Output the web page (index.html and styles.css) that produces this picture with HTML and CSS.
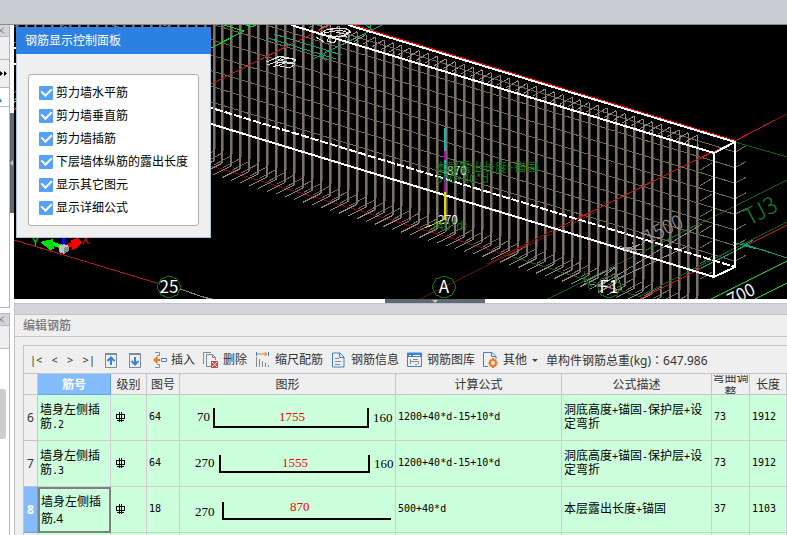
FILE: index.html
```html
<!DOCTYPE html>
<html lang="zh-CN">
<head>
<meta charset="utf-8">
<title>编辑钢筋</title>
<link rel="stylesheet" href="styles.css">
</head>
<body>
<header class="topbar"></header>
<div class="workspace">
  <aside class="sidebar">
    <section class="dock dock-upper">
      <div class="dock-head"><button class="close" aria-label="关闭"><svg width="5" height="7" viewBox="0 0 5 7"><path d="M-2 0.5L4 6.5M4 0.5L-2 6.5"/></svg></button></div>
      <div class="dock-row"></div>
      <div class="dock-row tall"><svg width="8" height="7" viewBox="0 0 8 7"><path d="M0 1v5l3-2.500zM4 1v5l3-2.500z"/></svg></div>
      <div class="dock-row light"><svg width="2" height="6" viewBox="0 0 2 6"><path class="blue" d="M0 1L2 5H0z"/></svg></div>
    </section>
    <section class="dock dock-lower">
      <div class="dock-head"><button class="close" aria-label="关闭"><svg width="5" height="7" viewBox="0 0 5 7"><path d="M-2 0.5L4 6.5M4 0.5L-2 6.5"/></svg></button></div>
      <div class="dock-row"></div>
      <div class="thumb"></div>
    </section>
  </aside>
  <div class="gutter"><button class="grip" aria-label="收起"><svg width="4" height="6" viewBox="0 0 4 6"><path d="M3 0v6L0 3z"/></svg></button></div>
  <main class="main">
    <section class="view">
      <svg class="scene" viewBox="14 25 773 274" preserveAspectRatio="xMinYMin slice">
        <g>
          <path class="dred" d="M14 107L211 166L507 255"/>
          <path class="drk" d="M420 299L500 259L600 210"/>
          <path class="dgreen" d="M735 142L787 157M507 255L644 298M548 299L787 180"/>
        </g>
        <g id="bars"></g>
        <g class="lines">
          <path class="red" d="M211 84L330 25"/>
          <path class="green" d="M211 48L244 31L224 25M246 25L251 27L256 25"/>
          <path class="red" d="M550 232L735 141L775 120"/>
          <path class="dred" d="M775 120L787 114M487 264L550 232"/>
          <path class="dgreen" d="M640 296L787 222"/>
          <path class="red" d="M640 299L787 225"/>
          <path class="green" d="M711 299L787 261M755 299L787 283"/>
          <path class="teal" d="M274 34L342 55M268 38L336 59M313 59L382 25M319 53L326 61M326 51L322 59M366 25L375 32M371 25L370 32M701 268L747 245M733 242L756 249M737 250L753 240M747 245L787 258M742 243L752 248"/>
          <path class="gray" d="M584 282L615 267M598 287L702 224M584 283L621 290M615 267L622 290M615 280L690 245M616 267L604 276"/>
          <path class="dgreen" d="M584 271L590 291M582 276L593 288"/>
        </g>
        <g class="wall">
          <path class="redtop" d="M352 25L735 141"/>
          <path d="M348 25L735 142V267L714 277V153L291 25M714 153L735 142M14 64L714 277"/>
          <path class="dash" d="M14 48L735 267"/>
        </g>
        <g class="marks">
          <path class="cyan" d="M445 128V182"/>
          <path class="magenta" d="M445 151V160M445 176V192"/>
          <path class="yellow" d="M445 192V220"/>
          <path class="yellow thin" d="M445 219L425 228"/>
          <path class="redaxis" d="M14 240L160 284"/>
          <path class="gray" d="M180 289L209 299M200 296L212 299"/>
        </g>
        <g class="gizmo">
          <path class="gz-g" d="M63 247L50 243"/><path class="gz-gf" d="M40 242L53 239L54 249L50 250z"/>
          <path class="gz-r" d="M65 247L78 242"/><path class="gz-rf" d="M71 240L77 238L82 242L77 248L72 250z"/>
          <path class="gz-b" d="M64 238V248"/><path class="gz-c" d="M59 246L64 244L69 246V251L64 254L59 252z"/>
          <path class="gz-t" d="M64 248V254L69 251V246z"/>
        </g>
        <text class="axis-y" x="32" y="246">Y</text><text class="axis-x" x="82" y="244">X</text>
        <g class="balloons">
          <path d="M169 276L177 279L181 287L177 295L169 298L161 295L157 287L161 279zM444 276L452 279L456 287L452 295L444 298L436 295L432 287L436 279zM609 276L617 279L621 286L617 295L609 298L601 295L597 286L601 279z"/>
          <text x="169" y="293">25</text><text x="444" y="293">A</text><text x="609" y="293">F1</text>
        </g>
        <g class="notes">
          <text class="n-white" x="447" y="175">870</text>
          <text class="n-white" x="438" y="224">270</text>
          <text class="n-green" x="435" y="172">本层露出长度+锚固</text>
          <text class="n-green" x="436" y="183">500+40*d</text>
          <text class="n-green" x="433" y="230">(40*d)</text>
          <text class="n-white big" x="731" y="306" transform="rotate(-26 731 306)">700</text>
          <text class="n-tag" x="749" y="226" transform="rotate(-28 749 226)">TJ3</text>
          <text class="n-dim" x="648" y="244" transform="rotate(-26 648 244)">1500</text>
        </g>
        <g class="flat">
          <path d="M266 62l16-6M267 65l20-7M273 67l12-4M275 58l4-2 15 3M279 62l16 2-5 4-15-3zM283 57l13 3-4 3-14-3zM318 35l8-5 14-2M316 37l8 5M324 33l16-3 9 3-10 4-14-2zM330 29l15-1 6 4-9 5M327 41l7 2 3-4-8-2zM334 36l13 1M336 32l12 3"/>
          <path class="dim" d="M619 246l16 6M628 252l12-8M623 247l20 3M632 242l5 11M641 245l5-6M624 250l14-5M641 233l19 6"/>
        </g>
      </svg>
      <form class="dialog">
        <h2>钢筋显示控制面板</h2>
        <div class="dialog-body">
          <div class="options">
            <label><input type="checkbox" checked>剪力墙水平筋</label>
            <label><input type="checkbox" checked>剪力墙垂直筋</label>
            <label><input type="checkbox" checked>剪力墙插筋</label>
            <label><input type="checkbox" checked>下层墙体纵筋的露出长度</label>
            <label><input type="checkbox" checked>显示其它图元</label>
            <label><input type="checkbox" checked>显示详细公式</label>
          </div>
        </div>
      </form>
    </section>
    <div class="splitter"><button class="grip-h" aria-label="收起"><svg width="6" height="3" viewBox="0 0 6 3"><path d="M0 0h6L3 3z"/></svg></button></div>
    <section class="editor">
      <div class="editor-strip"></div>
      <h1>编辑钢筋</h1>
      <div class="editor-box">
        <div class="toolbar">
          <div class="nav"><button>|&lt;</button><button>&lt;</button><button>&gt;</button><button>&gt;|</button></div>
          <button class="sq" aria-label="上移"><svg width="12" height="15" viewBox="0 0 12 15"><path class="k" d="M0 .5h12M0 1.500h12M.5 0v14.500h11V0"/><path class="b2" d="M6 12V5M2.500 8L6 4.500 9.500 8"/></svg></button>
          <button class="sq" aria-label="下移"><svg width="12" height="15" viewBox="0 0 12 15"><path class="k" d="M0 .5h12M0 1.500h12M.5 0v14.500h11V0"/><path class="b2" d="M6 4V11M2.500 8L6 11.500 9.500 8"/></svg></button>
          <button class="tool"><svg width="14" height="16" viewBox="0 0 14 16"><path class="k" d="M2 .5h4.500V4M2 15.500h4.500V12M4 3.500h3M4 12.500h3"/><path class="o" d="M7 8H1.500M4.500 5L1.500 8l3 3"/><path class="b" d="M8.500 6.500h5v3h-5z"/></svg>插入</button>
          <button class="tool"><svg width="16" height="16" viewBox="0 0 16 16"><path class="k" d="M.5 12V.5H8M8 14.500H3.500v-12h6l3 3V8M9.500 2.500v3h3"/><path class="rf" d="M8 9h7v7H8z"/><path class="w" d="M9 10l5 5M14 10l-5 5"/></svg>删除</button>
          <button class="tool"><svg width="16" height="16" viewBox="-1 0 16 16"><path class="b" d="M.5 0v4M12.500 0v4"/><path class="o1" d="M1 2h10M8.500 0l2.500 2-2.500 2"/><path class="k" d="M.5 5v10M3.500 7v8M6.500 9v6M9.500 11v4M12.500 13v2"/></svg>缩尺配筋</button>
          <button class="tool"><svg width="16" height="16" viewBox="0 0 16 16"><path class="b" d="M1.500 1H9l4 4v10H1.500zM8.500 1v4.500H13"/><path class="k" d="M4 6.500h4M4 9.500h6M4 12.500h5"/></svg>钢筋信息</button>
          <button class="tool"><svg width="16" height="16" viewBox="0 0 16 16"><path class="b" d="M.5 1v13.500h14V1z"/><path class="bf" d="M0 1h15v4H0z"/><path class="w" d="M2 3.500h2M6 3.500h7"/><path class="k" d="M3.500 7v5M3.500 9.500h8V12M6 7.500h5"/><path class="o1" d="M8 12.500h2"/></svg>钢筋图库</button>
          <button class="tool"><svg width="16" height="16" viewBox="0 0 16 16"><path class="b" d="M5 14.500H.5V.5H9l4 4V7M8.500.5v4H13"/><circle class="gear" cx="10" cy="11" r="3"/><path class="o" d="M10 6v2M10 14v2M5.500 11h2M12.500 11h2M7 8l1 1M12 13l1 1M13 8l-1 1M8 13l-1 1"/></svg>其他<span class="caret"></span></button>
          <span class="total">单构件钢筋总重(kg)<span class="colon" lang="zh-TW">：</span>647.986</span>
        </div>
        <table class="grid">
          <colgroup><col class="c0"><col class="c1"><col class="c2"><col class="c3"><col><col class="c5"><col class="c6"><col class="c7"><col class="c8"></colgroup>
          <thead><tr><th></th><th class="on">筋号</th><th>级别</th><th>图号</th><th>图形</th><th>计算公式</th><th>公式描述</th><th><div class="clip">弯曲调整</div></th><th>长度</th></tr></thead>
          <tbody>
            <tr><th>6</th><td>墙身左侧插筋<span class="m">.2</span></td><td><svg class="grade" width="9" height="10" viewBox="0 0 9 10"><path d="M0 2.500h9M0 6.500h9M1 8.500h7M.5 2v5M8.500 2v5M3.500 0v10M5.500 0v10"/></svg></td><td class="num">64</td>
              <td class="shape"><svg viewBox="180 395 215 45"><path d="M214 408V427H368V408"/><text x="197" y="421">70</text><text class="r" x="279" y="421">1755</text><text x="373" y="422">160</text></svg></td>
              <td class="num">1200+40*d-15+10*d</td><td>洞底高度<span class="m">+</span>锚固<span class="m">-</span>保护层<span class="m">+</span>设定弯折</td><td class="num">73</td><td class="num">1912</td></tr>
            <tr><th>7</th><td>墙身左侧插筋<span class="m">.3</span></td><td><svg class="grade" width="9" height="10" viewBox="0 0 9 10"><path d="M0 2.500h9M0 6.500h9M1 8.500h7M.5 2v5M8.500 2v5M3.500 0v10M5.500 0v10"/></svg></td><td class="num">64</td>
              <td class="shape"><svg viewBox="180 441 215 45"><path d="M220 455V472H369V455"/><text x="195" y="467">270</text><text class="r" x="282" y="467">1555</text><text x="374" y="468">160</text></svg></td>
              <td class="num">1200+40*d-15+10*d</td><td>洞底高度<span class="m">+</span>锚固<span class="m">-</span>保护层<span class="m">+</span>设定弯折</td><td class="num">73</td><td class="num">1912</td></tr>
            <tr><th class="on">8</th><td class="focus">墙身左侧插筋.4</td><td><svg class="grade" width="9" height="10" viewBox="0 0 9 10"><path d="M0 2.500h9M0 6.500h9M1 8.500h7M.5 2v5M8.500 2v5M3.500 0v10M5.500 0v10"/></svg></td><td class="num">18</td>
              <td class="shape"><svg viewBox="180 487 215 45"><path d="M223 502V519H391"/><text x="195" y="516">270</text><text class="r" x="290" y="511">870</text></svg></td>
              <td class="num">500+40*d</td><td>本层露出长度<span class="m">+</span>锚固</td><td class="num">37</td><td class="num">1103</td></tr>
            <tr><th></th><td></td><td></td><td></td><td></td><td></td><td></td><td></td><td></td></tr>
          </tbody>
        </table>
      </div>
    </section>
  </main>
</div>
<script src="scene.js"></script>
</body>
</html>
```
FILE: styles.css
```css
* { box-sizing: border-box; }
body {
  margin: 0; height: 100vh; overflow: hidden; display: flex; flex-direction: column;
  font: 12px/16px "Noto Sans", "Noto Sans CJK SC", sans-serif; color: #333; background: #fff;
}
button { font: inherit; color: inherit; border: 0; padding: 0; background: none; display: flex; align-items: center; white-space: nowrap; }
svg { display: block; flex: none; }
h1, h2 { margin: 0; font-size: 12px; font-weight: 400; }

.topbar { height: 25px; flex: none; background: #cacdd2; border-bottom: 1px solid #868d91; }
.workspace { flex: 1; min-height: 0; display: flex; }

.sidebar { width: 10px; flex: none; display: flex; flex-direction: column; gap: 5px; overflow: hidden; }
.dock { border-right: 1px solid #b5b5b9; background: #fff; }
.dock-upper { height: 283px; border-bottom: 1px solid #b5b5b9; }
.dock-lower { flex: 1; border-top: 1px solid #b5b5b9; }
.dock-head { height: 12px; background: #d3d4da; border-bottom: 1px solid #bbb; display: flex; align-items: center; }
.close svg { fill: none; stroke: #777; }
.dock-row { height: 23px; background: #efefef; border-bottom: 1px solid #b9b9bf; display: flex; align-items: center; }
.dock-row.tall { height: 28px; }
.dock-row.light { height: 19px; background: #fff; align-items: flex-end; padding-bottom: 3px; }
.dock-row .blue { fill: #2688c8; }
.thumb { width: 6px; height: 50px; margin-top: 40px; background: #cdcdcd; border-radius: 0 3px 3px 0; }

.gutter { width: 4px; flex: none; padding-top: 88px; }
.grip { width: 4px; height: 100px; background: #5f6a75; }
.grip svg, .grip-h svg { fill: #c4c8cc; }

.main { flex: 1; min-width: 0; display: flex; flex-direction: column; }
.view { height: 274px; flex: none; position: relative; background: #000; overflow: hidden; }
.scene { width: 100%; height: 100%; fill: none; stroke-width: 1; }
.scene path { shape-rendering: crispEdges; }
.red { stroke: #d01212; } .dred { stroke: #860a0a; } .drk { stroke: #5c1808; }
.green { stroke: #0ce00c; } .dgreen { stroke: #0a640f; } .teal { stroke: #0ca47c; } .gray { stroke: #858585; }
.redaxis { stroke: #b01818; }
.rod { stroke: #7d706b; stroke-width: 2; } .rod-dark { stroke: #47433a; stroke-width: 1; }
.hook { stroke: #96847f; } .hook-dark { stroke: #6e6656; } .mesh { stroke: #6c694d; }
.wall { stroke: #fff; stroke-width: 2; } .wall .redtop { stroke: #f00; } .dash { stroke-dasharray: 8 2; }
.marks .cyan { stroke: #12b4be; stroke-width: 2; } .marks .magenta { stroke: #b400b4; stroke-width: 2; }
.marks .yellow { stroke: #e0d800; stroke-width: 2; } .marks .thin { stroke-width: 1; }
.gz-g { stroke: #0f0; stroke-width: 4; } .gz-gf { fill: #00e010; } .gz-r { stroke: #d00; stroke-width: 4; } .gz-rf { fill: #f00; }
.gz-b { stroke: #00f; stroke-width: 4; } .gz-c { fill: #c0c0c0; } .gz-t { fill: #8c8c8c; }
.axis-y { fill: #0e0; font-size: 12px; } .axis-x { fill: #e01010; font-size: 12px; }
.balloons { stroke: #0a780f; } .balloons text { stroke: none; fill: #fff; font: 17px "Noto Sans CJK SC", sans-serif; text-anchor: middle; }
.notes { font-family: "Noto Sans CJK SC", sans-serif; }
.notes .n-white { fill: #eee; font-size: 12px; } .notes .big { font-size: 17px; }
.notes .n-green { fill: #087c10; font-size: 12px; } .notes .n-tag { fill: #0b8428; font-size: 23px; font-weight: 300; }
.notes .n-dim { fill: #999; font-size: 19px; font-weight: 300; }
.flat { stroke: #e0e0e0; } .flat .dim { stroke: #999; }

.dialog { position: absolute; left: 2px; top: 2px; width: 195px; background: #efefef; border: 1px solid #b4c3dc; border-top: 0; color: #000; }
.dialog h2 { margin: 0 -1px; height: 27px; line-height: 27px; padding-left: 9px; color: #fff; background: #2c80e2; }
.dialog-body { padding: 20px 11px 11px; }
.options { background: #fff; border: 1px solid #b0b0b0; border-radius: 3px; padding: 6px 10px; }
.options label { display: flex; align-items: center; gap: 3px; height: 23px; white-space: nowrap; }
.options input { appearance: none; margin: 0; width: 14px; height: 14px; flex: none; border-radius: 1px; background: #55a0f8; display: grid; place-items: center; }
.options input:checked::after { content: ""; width: 5px; height: 8px; margin-bottom: 3px; border: solid #fff; border-width: 0 2px 2px 0; transform: rotate(45deg); }

.splitter { height: 4px; flex: none; display: flex; justify-content: center; }
.grip-h { width: 100px; height: 4px; margin-left: 69px; background: #5f6a75; justify-content: center; align-items: flex-end; }

.editor { flex: 1; min-height: 0; display: flex; flex-direction: column; background: #efefef; border: solid #bfc2c8; border-width: 1px 0 0 1px; }
.editor-strip { height: 11px; flex: none; background: #d3d5da; border-bottom: 1px solid #c0c3ca; }
.editor h1 { height: 22px; flex: none; line-height: 22px; padding-left: 8px; color: #777; font-weight: 500; border-bottom: 1px solid #c3c5ca; }
.editor-box { flex: 1; min-height: 0; margin: 8px 0 0 8px; border: solid #c3c3c8; border-width: 1px 0 0 1px; overflow: hidden; }
.toolbar { height: 28px; display: flex; align-items: center; gap: 8px; padding: 1px 0 0 6px; border-bottom: 1px solid #c3c3c8; white-space: nowrap; }
.nav { display: flex; justify-content: space-between; width: 65px; margin-right: 2px; }
.nav button { font-size: 11px; }
.sq { margin-right: 4px; }
.tool { gap: 4px; }
.toolbar svg { fill: none; }
.colon { font-family: "Noto Sans CJK TC", sans-serif; }
.k { stroke: #7d8c97; } .b { stroke: #3c82d2; } .b2 { stroke: #3c82d2; stroke-width: 2; } .bf { fill: #3c82d2; }
.o { stroke: #f07820; stroke-width: 2; } .o1 { stroke: #f07820; } .gear { stroke: #f07820; stroke-width: 2; } .w { stroke: #fff; } .rf { fill: #d94545; }
.caret { border: 3px solid transparent; border-top-color: #444; border-bottom: 0; margin-left: 1px; }

.grid { width: 100%; table-layout: fixed; border-collapse: separate; border-spacing: 0; color: #000; }
.c0 { width: 14px; } .c1 { width: 73px; } .c2 { width: 36px; } .c3 { width: 33px; }
.c5 { width: 166px; } .c6 { width: 150px; } .c7 { width: 38px; } .c8 { width: 37px; }
.grid th { padding: 0; font-weight: 400; color: #333; background: #efefef; border: solid #c3c3c8; border-width: 0 1px 1px 0; }
.grid thead th { height: 21px; padding-top: 1px; }
.grid th.on { background: #83bbfb; color: #fff; font-weight: 700; border-color: #62a4ec; }
.clip { height: 19px; line-height: 15px; overflow: hidden; display: flex; align-items: center; }
.grid td { height: 46px; padding: 0 2px 1px; line-height: 14px; background: #ccffdb; border: solid #d3cdd3; border-width: 0 1px 1px 0; overflow: hidden; }
.grid td.num, .m { font-family: "DejaVu Sans Mono", monospace; font-size: 10px; }
.m { line-height: 10px; }
.grid td.focus { border: 2px solid #808080; padding: 0 1px; line-height: 17px; }
.grid td.shape { padding: 0; }
.grade { margin-left: 3px; fill: none; stroke: #000; shape-rendering: crispEdges; }
.shape svg { width: 100%; height: 45px; }
.shape path { fill: none; stroke: #000; stroke-width: 2; }
.shape text { font: 13px "Liberation Serif", serif; fill: #000; }
.shape .r { fill: #f00; }
```
FILE: scene.js
```js
// Draws the reinforcement cage: horizontal mesh lines, vertical rods and their hooks.
const frontTop = x => 153 - (714 - x) * 0.3055;
const backTop = x => 142 - (735 - x) * 0.305;
const frontBottom = x => 277 - (714 - x) * 0.3045;
const d = { mesh: "", dark: "", rod: "", hookDark: "", hook: "" };
const line = (x1, y1, x2, y2) => `M${x1.toFixed(1)} ${y1.toFixed(1)}L${x2.toFixed(1)} ${y2.toFixed(1)}`;

for (let i = 0; i < 8; i++) {
  const yb = 152 + i * 15.6;
  d.mesh += line(14, yb - 721 * 0.304, 735, yb) + line(735, yb, 746, yb - 6);
  const yf = 162 + i * 15.6;
  d.mesh += line(700, yf + 8, 712, yf + 1);
}
for (let k = -22; k < 55; k++) {
  const x = Math.round(213.5 + k * 8.95);
  const foot = frontBottom(x) + 36;
  const backFoot = frontBottom(x) + 24;
  d.dark += line(x + 1.5, frontTop(x) - 4, x + 1.5, backFoot);
  d.rod += line(x, frontTop(x) - 2, x, foot);
  d.hook += line(x, foot, x - 18, foot + 9) + line(x, backTop(x) + 5, x, frontTop(x)) + line(x, backTop(x) + 5, x - 12, backTop(x) + 12);
  d.hookDark += line(x, backFoot + 2, x - 17, backFoot + 11);
}
const add = (cls, path) => {
  const el = document.createElementNS("http://www.w3.org/2000/svg", "path");
  el.setAttribute("class", cls);
  el.setAttribute("d", path);
  document.getElementById("bars").append(el);
};
add("rod-dark", d.dark);
add("hook-dark", d.hookDark);
add("rod", d.rod);
add("hook", d.hook);
add("mesh", d.mesh);
```
